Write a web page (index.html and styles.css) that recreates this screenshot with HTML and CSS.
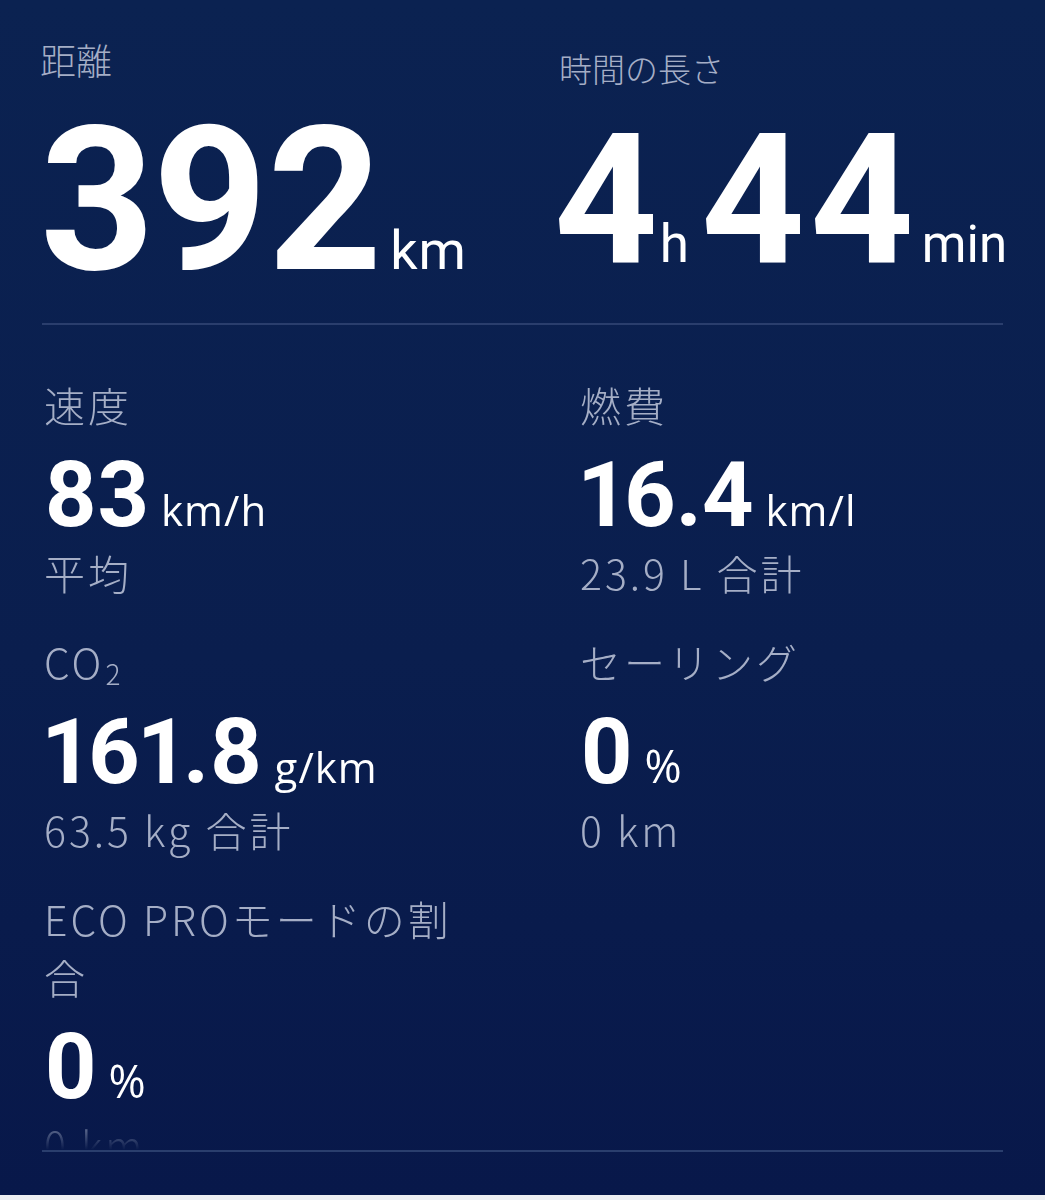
FILE: index.html
```html
<!DOCTYPE html>
<html lang="ja">
<head>
    <meta charset="UTF-8">
    <meta name="viewport" content="width=device-width, initial-scale=1.0">
    <title>走行データ</title>
    <link rel="stylesheet" href="styles.css">
</head>
<body>

    <div class="screen">
        <!-- Trip totals -->
        <section class="totals">
            <div class="total">
                <div class="total-label">距離</div>
                <div class="total-value">392<span class="total-unit">km</span></div>
            </div>
            <div class="total total-time">
                <div class="total-label">時間の長さ</div>
                <div class="total-value">4<span class="total-unit">h</span><span class="total-num">44</span><span class="total-unit unit-min">min</span></div>
            </div>
        </section>

        <hr class="divider">

        <!-- Trip details -->
        <section class="stats">
            <div class="stat">
                <div class="stat-label">速度</div>
                <div class="stat-value">83<span class="stat-unit">km/h</span></div>
                <div class="stat-sub">平均</div>
            </div>
            <div class="stat">
                <div class="stat-label">燃費</div>
                <div class="stat-value">16.4<span class="stat-unit">km/l</span></div>
                <div class="stat-sub">23.9 L 合計</div>
            </div>
            <div class="stat">
                <div class="stat-label">CO<sub class="chem">2</sub></div>
                <div class="stat-value">161.8<span class="stat-unit">g/km</span></div>
                <div class="stat-sub">63.5 kg 合計</div>
            </div>
            <div class="stat">
                <div class="stat-label">セーリング</div>
                <div class="stat-value">0<span class="stat-unit pct">%</span></div>
                <div class="stat-sub">0 km</div>
            </div>
            <div class="stat">
                <div class="stat-label">ECO PROモードの割合</div>
                <div class="stat-value">0<span class="stat-unit pct">%</span></div>
                <div class="stat-sub">0 km</div>
            </div>
        </section>

        <hr class="divider">
    </div>

</body>
</html>
```

FILE: styles.css
```css
body { margin: 0; background: #eef0f3; font-family: "Noto Sans CJK JP", "Noto Sans", sans-serif; }
.screen {
    width: 1045px; height: 1195px; overflow: hidden;
    background: linear-gradient(180deg, #0b2251 0%, #0a1e4e 55%, #08184a 100%);
}

/* totals */
.totals { display: grid; grid-template-columns: 519px 1fr; padding: 37px 0 0 40px; align-items: start; }
.total-time { padding-top: 9px; }
.total-label { font-size: 36px; line-height: 44px; font-weight: 300; color: #a5aec6; margin-bottom: 20px; }
.total-time .total-label { font-size: 33px; }
.total-value {
    font-family: Roboto, "Liberation Sans", sans-serif; font-weight: 700;
    font-size: 200px; line-height: 200px; color: #fff; white-space: nowrap; letter-spacing: -2px;
    font-variant-numeric: proportional-nums;
}
.total-time .total-value { font-size: 181px; line-height: 181px; letter-spacing: 0; margin-left: -5px; }
.total-unit { font-weight: 400; font-size: 54px; line-height: 1; letter-spacing: 1px; margin-left: 10px; }
.total-time .total-unit { font-size: 53px; letter-spacing: 0; margin-left: 2px; }
.total-num { margin-left: 12px; letter-spacing: 5px; }
.total-time .unit-min { font-size: 51px; margin-left: 3px; }

.divider { border: none; border-top: 2px solid #2a3e6d; margin: 22px 42px 0; height: 0; }

/* stats */
.stats {
    display: grid; grid-template-columns: 536px 1fr; row-gap: 31px;
    padding-left: 44px; margin-top: 50px; height: 775px; overflow: hidden;
    -webkit-mask-image: linear-gradient(180deg, #000 calc(100% - 40px), transparent);
    mask-image: linear-gradient(180deg, #000 calc(100% - 40px), transparent);
}
.stats + .divider { margin-top: 0; }
.stat { max-width: 430px; }
.stat-label, .stat-sub { font-size: 41px; line-height: 58px; font-weight: 300; color: #a5aec6; letter-spacing: 3px; }
.chem { font-size: 28px; line-height: 1; vertical-align: -6px; letter-spacing: 0; margin-left: 1px; }
.stat-value {
    font-family: Roboto, "Liberation Sans", sans-serif; font-weight: 700;
    font-size: 90px; line-height: 94px; color: #fff; margin-top: 16px; white-space: nowrap;
    font-variant-numeric: proportional-nums;
}
.stat-unit { font-family: "Open Sans", Roboto, sans-serif; font-weight: 400; font-size: 42px; line-height: 1; letter-spacing: 1px; margin-left: 12px; }
.stat-unit.pct { font-size: 45px; margin-left: 11px; }
```
